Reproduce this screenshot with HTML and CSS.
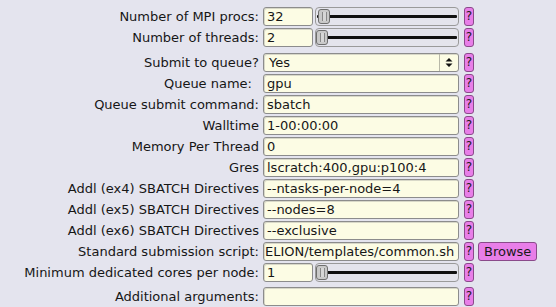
FILE: index.html
```html
<!DOCTYPE html>
<html>
<head>
<meta charset="utf-8">
<link rel="stylesheet" href="styles.css">
</head>
<body>
<div class="form">
  <div class="group">
    <div class="row">
      <span class="label">Number of MPI procs:</span>
      <div class="slider-ctl">
        <div class="field short">32</div>
        <div class="slider"><div class="line"></div><div class="knob" style="left: 2px"><span></span></div></div>
      </div>
      <span class="help">?</span>
    </div>
    <div class="row">
      <span class="label">Number of threads:</span>
      <div class="slider-ctl">
        <div class="field short">2</div>
        <div class="slider"><div class="line"></div><div class="knob" style="left: 0px"><span></span></div></div>
      </div>
      <span class="help">?</span>
    </div>
  </div>
  <div class="group">
    <div class="row">
      <span class="label">Submit to queue?</span>
      <div class="field select"><span class="sel-text">Yes</span><span class="sel-arrow"><svg width="8" height="11" viewBox="0 0 8 11"><path d="M0.5 4.5 L4 1 L7.5 4.5 Z M0.5 6.5 L4 10 L7.5 6.5 Z" fill="#111"/></svg></span></div>
      <span class="help">?</span>
    </div>
    <div class="row">
      <span class="label pad">Queue name:</span>
      <div class="field">gpu</div>
      <span class="help">?</span>
    </div>
    <div class="row">
      <span class="label">Queue submit command:</span>
      <div class="field">sbatch</div>
      <span class="help">?</span>
    </div>
    <div class="row">
      <span class="label">Walltime</span>
      <div class="field">1-00:00:00</div>
      <span class="help">?</span>
    </div>
    <div class="row">
      <span class="label">Memory Per Thread</span>
      <div class="field">0</div>
      <span class="help">?</span>
    </div>
    <div class="row">
      <span class="label">Gres</span>
      <div class="field">lscratch:400,gpu:p100:4</div>
      <span class="help">?</span>
    </div>
    <div class="row">
      <span class="label">Addl (ex4) SBATCH Directives</span>
      <div class="field">--ntasks-per-node=4</div>
      <span class="help">?</span>
    </div>
    <div class="row">
      <span class="label">Addl (ex5) SBATCH Directives</span>
      <div class="field">--nodes=8</div>
      <span class="help">?</span>
    </div>
    <div class="row">
      <span class="label">Addl (ex6) SBATCH Directives</span>
      <div class="field">--exclusive</div>
      <span class="help">?</span>
    </div>
    <div class="row">
      <span class="label">Standard submission script:</span>
      <div class="field tight">ELION/templates/common.sh</div>
      <span class="help">?</span>
      <span class="browse">Browse</span>
    </div>
    <div class="row">
      <span class="label">Minimum dedicated cores per node:</span>
      <div class="slider-ctl">
        <div class="field short">1</div>
        <div class="slider"><div class="line"></div><div class="knob" style="left: 0px"><span></span></div></div>
      </div>
      <span class="help">?</span>
    </div>
  </div>
  <div class="group">
    <div class="row">
      <span class="label">Additional arguments:</span>
      <div class="field"></div>
      <span class="help">?</span>
    </div>
  </div>
</div>
</body>
</html>
```

FILE: styles.css
```css
html, body {
  margin: 0;
  padding: 0;
  background: #e4e4ee;
  width: 556px;
  height: 307px;
  overflow: hidden;
}

.form {
  font-family: "DejaVu Sans", sans-serif;
  font-size: 13px;
  color: #161616;
  padding-top: 7px;
  display: flex;
  flex-direction: column;
  gap: 6px;
}

.group {
  display: flex;
  flex-direction: column;
  gap: 2px;
}

.group:last-child {
  margin-top: -1px;
}

.row {
  display: grid;
  grid-template-columns: 259px 196px 10px auto;
  column-gap: 4px;
  height: 19px;
  align-items: center;
}

.row .help {
  margin-left: 1px;
}

.label {
  text-align: right;
  white-space: nowrap;
  line-height: 19px;
}

.label.pad {
  padding-right: 7px;
}

.field {
  box-sizing: border-box;
  height: 19px;
  border: 1px solid #8c8c8c;
  border-radius: 3px;
  background: #fcfce4;
  padding: 0 3px;
  line-height: 17px;
  white-space: nowrap;
  overflow: hidden;
  box-shadow: inset 1px 1px 0 #d8d8c8;
}

.field.tight {
  padding-left: 1px;
}

.slider-ctl {
  display: flex;
  gap: 2px;
  height: 19px;
}

.field.short {
  width: 50px;
  flex: none;
}

.slider {
  position: relative;
  flex: 1;
  box-sizing: border-box;
  height: 19px;
  border: 1px solid #9a9a9a;
  border-radius: 4px;
  background: #e4e4ec;
}

.slider .line {
  position: absolute;
  left: 1px;
  right: 1px;
  top: 7px;
  height: 3px;
  background: #111;
  border-radius: 1px;
}

.knob {
  position: absolute;
  top: 1px;
  width: 12px;
  height: 15px;
  box-sizing: border-box;
  border: 1px solid #6e6e6e;
  border-radius: 3px;
  background: #c9c9c9;
}

.knob span {
  position: absolute;
  left: 3px;
  top: 2px;
  width: 3px;
  height: 9px;
  border-left: 1px solid #888;
  border-right: 1px solid #888;
  background: #d6d6d6;
}

.select {
  display: flex;
  padding: 0;
  background: #fcfce4;
}

.sel-text {
  flex: 1;
  padding-left: 5px;
}

.sel-arrow {
  width: 18px;
  border-left: 1px solid #b8b8a8;
  display: flex;
  align-items: center;
  justify-content: center;
}

.sel-arrow svg {
  display: block;
}

.help {
  box-sizing: border-box;
  height: 19px;
  width: 10px;
  background: #e87ee8;
  border: 1px solid #8a4a8a;
  border-radius: 3px;
  font-size: 12px;
  line-height: 17px;
  text-align: center;
  color: #1a1a1a;
}

.browse {
  box-sizing: border-box;
  justify-self: start;
  margin-left: 1px;
  height: 19px;
  padding: 0 5px;
  background: #e87ee8;
  border: 1px solid #8a4a8a;
  border-radius: 3px;
  line-height: 17px;
  color: #1a1a1a;
}
```
